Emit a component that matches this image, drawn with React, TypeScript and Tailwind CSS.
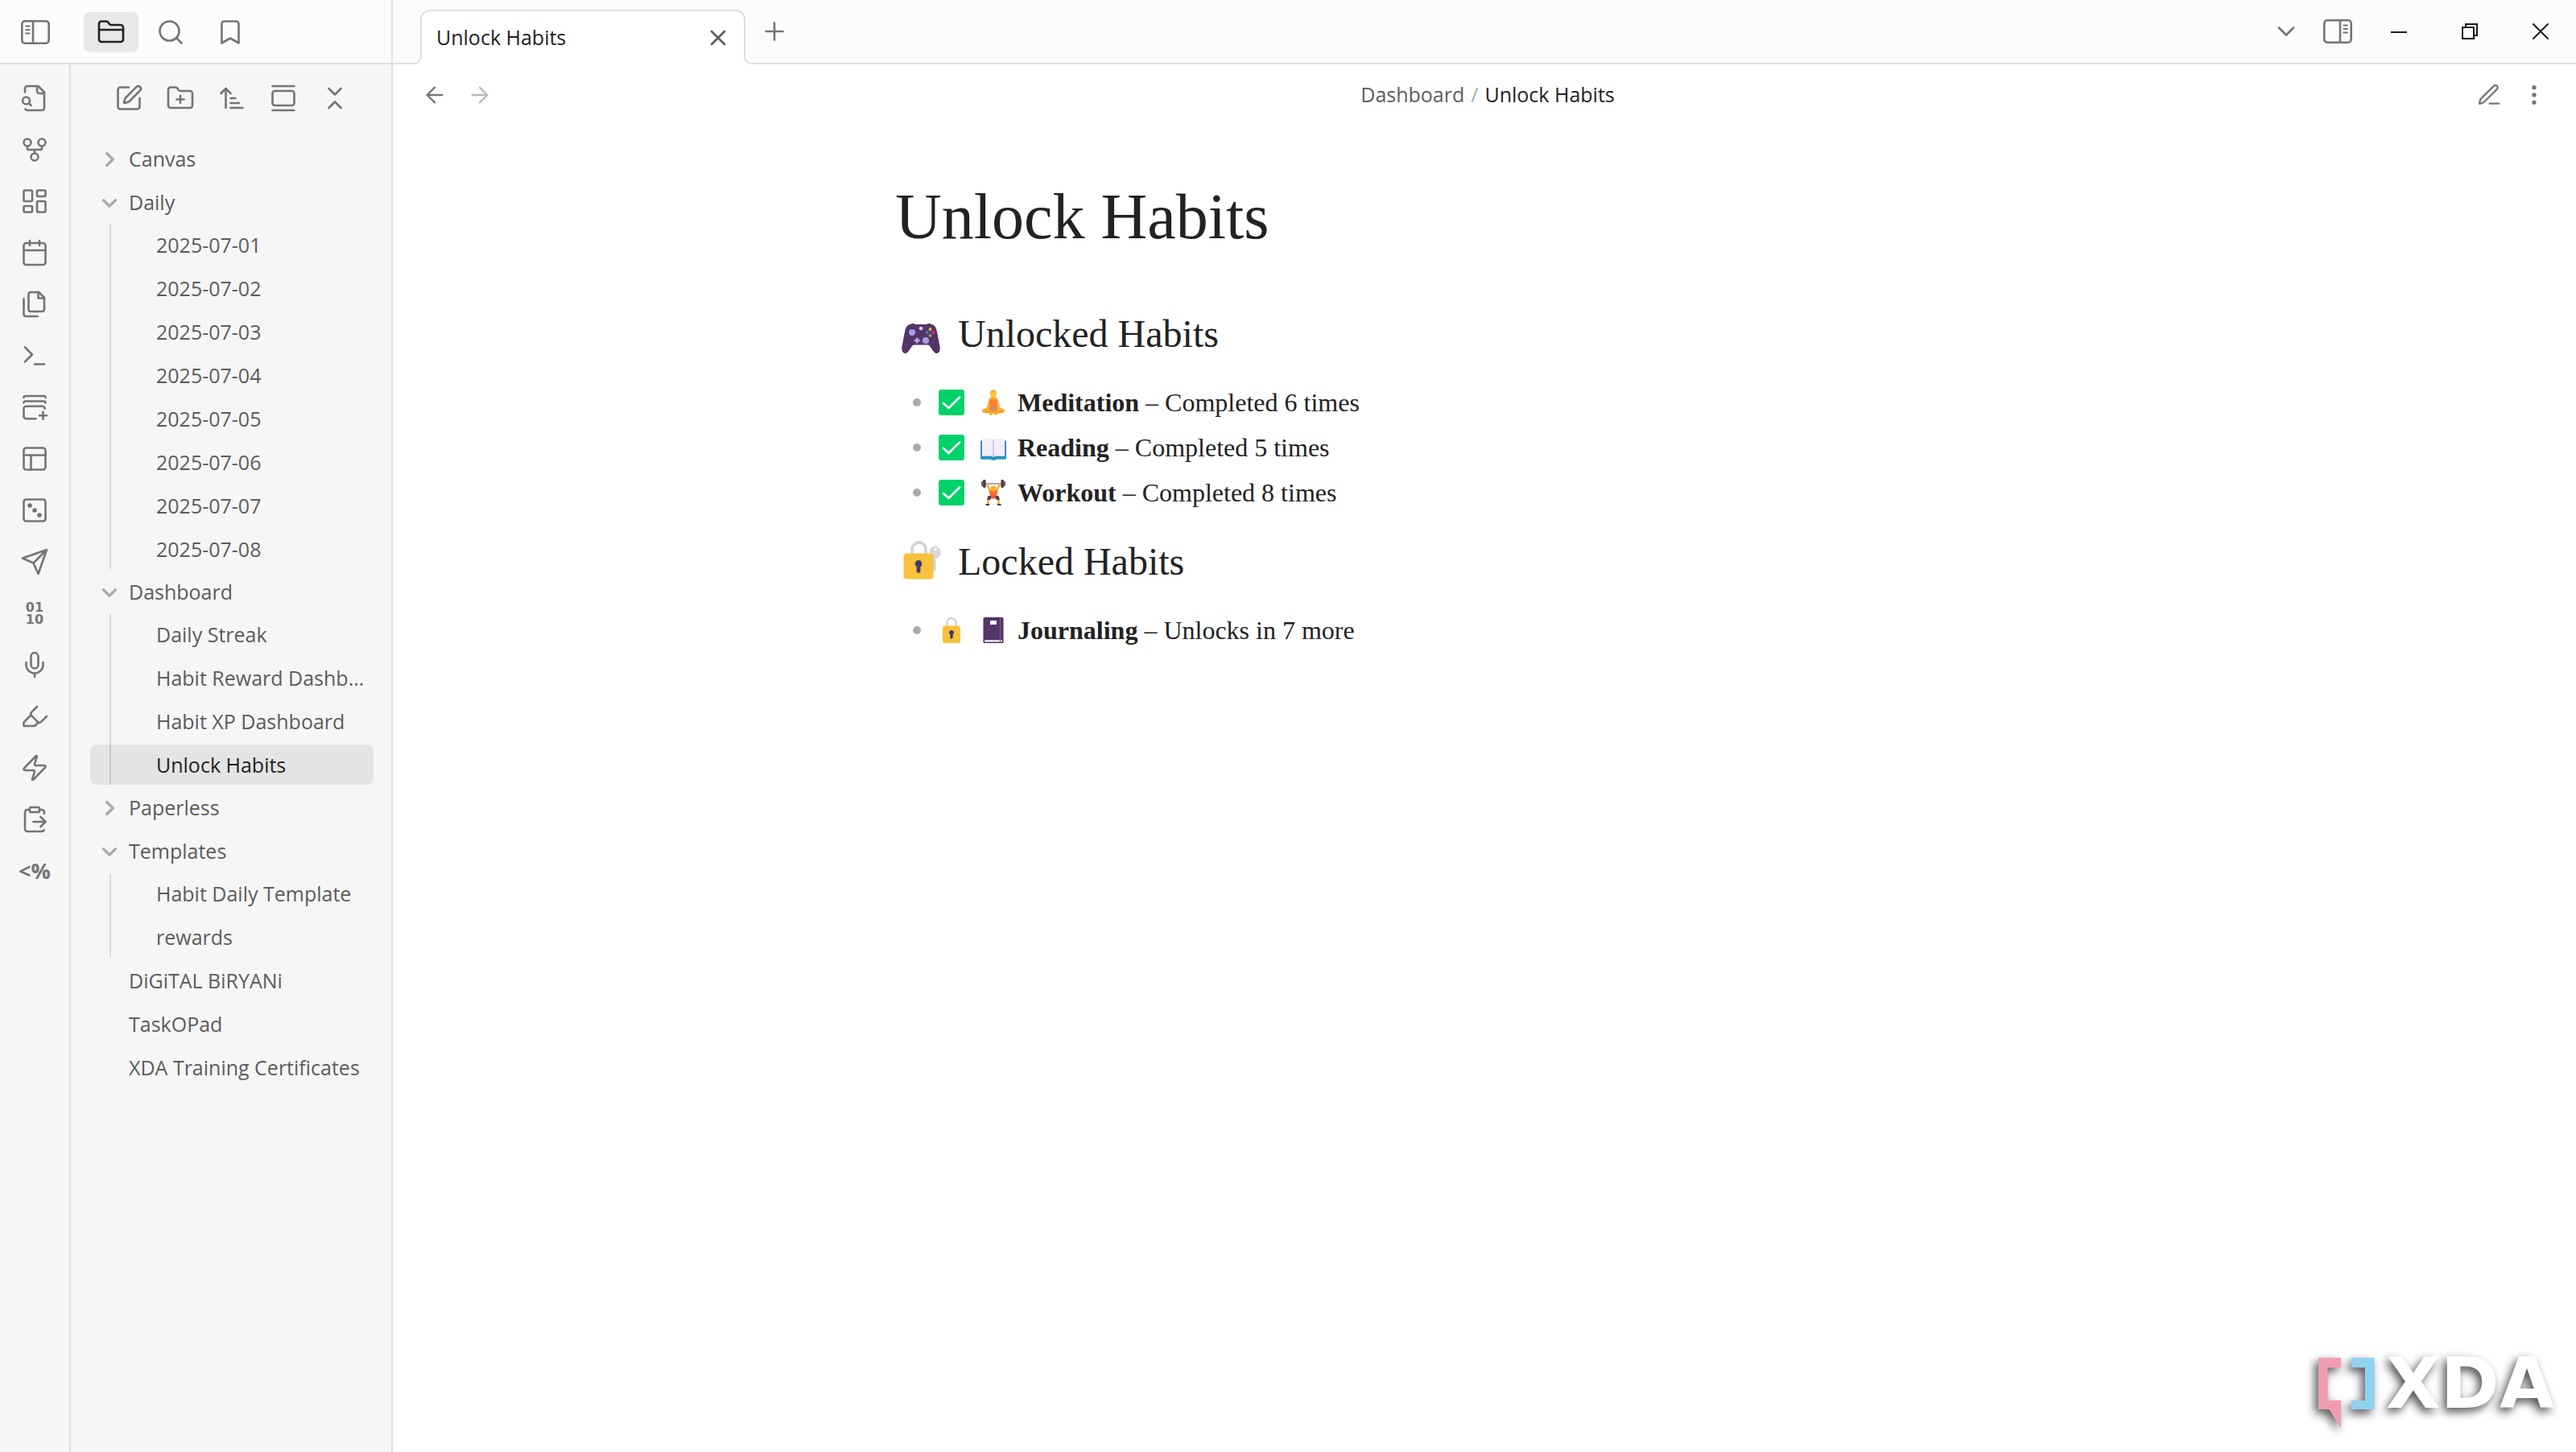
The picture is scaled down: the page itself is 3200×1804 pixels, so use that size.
import type { ReactNode } from 'react'
import {
  ArrowLeft,
  ArrowRight,
  ArrowUpNarrowWide,
  Bookmark,
  Calendar,
  ChevronDown,
  ChevronsDownUp,
  ClipboardPaste,
  EllipsisVertical,
  FolderClosed,
  FolderPlus,
  GalleryVertical,
  GitFork,
  Highlighter,
  LayoutDashboard,
  Mic,
  PanelsTopLeft,
  Plus,
  Search,
  SquarePen,
  X,
  Zap,
} from 'lucide-react'
import { clsx } from 'clsx'

type IconProps = { className?: string }

function StrokeIcon({
  className = 'size-9',
  children,
}: IconProps & { children: ReactNode }) {
  return (
    <svg
      viewBox="0 0 24 24"
      className={className}
      fill="none"
      stroke="currentColor"
      strokeWidth={1.75}
      strokeLinecap="round"
      strokeLinejoin="round"
      aria-hidden="true"
    >
      {children}
    </svg>
  )
}

function SidebarIcon({ className }: IconProps) {
  return (
    <svg
      viewBox="0 0 40 36"
      className={clsx('h-9 w-10', className)}
      fill="none"
      stroke="currentColor"
      strokeWidth={2.6}
      strokeLinecap="round"
      aria-hidden="true"
    >
      <rect x="3.3" y="4.3" width="33.4" height="27.4" rx="3.6" />
      <path d="M17 4.5v27" />
      <path d="M8.2 10.5h4.4M8.2 15h4.4M8.2 19.5h4.4" strokeWidth={2.2} />
    </svg>
  )
}

function FileSearchIcon() {
  return (
    <StrokeIcon>
      <path d="M4 7V4a2 2 0 0 1 2-2h9l5 5v13a2 2 0 0 1-2 2H6a2 2 0 0 1-1.7-1" />
      <path d="M14 2v4a2 2 0 0 0 2 2h4" />
      <circle cx="5" cy="14" r="3" />
      <path d="m9 18-1.5-1.5" />
    </StrokeIcon>
  )
}

function FilesIcon() {
  return (
    <StrokeIcon>
      <path d="M15.5 2H8.6c-.4 0-.8.2-1.1.5-.3.3-.5.7-.5 1.1v12.8c0 .4.2.8.5 1.1.3.3.7.5 1.1.5h9.8c.4 0 .8-.2 1.1-.5.3-.3.5-.7.5-1.1V6.5L15.5 2z" />
      <path d="M3 7.6v12.8c0 .4.2.8.5 1.1.3.3.7.5 1.1.5h9.8" />
      <path d="M15 2v5h5" />
    </StrokeIcon>
  )
}

function TerminalIcon() {
  return (
    <StrokeIcon>
      <path d="m4 17 6-6-6-6M12 19h8" />
    </StrokeIcon>
  )
}

function StackPlusIcon() {
  return (
    <StrokeIcon>
      <path d="M3 4c0-.9.4-1.3 1.3-1.3h15.4c.9 0 1.3.4 1.3 1.3" />
      <path d="M3 8.3c0-.9.4-1.3 1.3-1.3h15.4c.9 0 1.3.4 1.3 1.3" />
      <path d="M13 21.5H5a2 2 0 0 1-2-2v-6.3a2 2 0 0 1 2-2h13.5a2 2 0 0 1 2 2" />
      <path d="M19 15.8v6M16 18.8h6" />
    </StrokeIcon>
  )
}

function DiceIcon() {
  return (
    <StrokeIcon>
      <rect x="3" y="3" width="18" height="18" rx="2" />
      <circle cx="8" cy="8" r="1" fill="currentColor" />
      <circle cx="12" cy="12" r="1" fill="currentColor" />
      <circle cx="16" cy="16" r="1" fill="currentColor" />
    </StrokeIcon>
  )
}

function SendIcon() {
  return (
    <StrokeIcon>
      <path d="M22 2 11 13M22 2l-7 20-4-9-9-4Z" />
    </StrokeIcon>
  )
}

function PenIcon() {
  return (
    <StrokeIcon className="size-8">
      <path d="M16.4 3.6a2.1 2.1 0 0 1 3 3L7.6 18.4c-1 1-2.6 1.5-4.4 1.7.1-1.8.3-3.7 1.3-4.7Z" />
      <path d="M12.5 20H21" />
    </StrokeIcon>
  )
}

function CollapseIcon({ open }: { open: boolean }) {
  return (
    <svg
      viewBox="0 0 24 24"
      className={clsx('size-5 shrink-0 text-[#ababab]', !open && '-rotate-90')}
      fill="none"
      stroke="currentColor"
      strokeWidth={4}
      strokeLinecap="round"
      strokeLinejoin="round"
      aria-hidden="true"
    >
      <path d="m3 8 9 9 9-9" />
    </svg>
  )
}

function GamepadEmoji() {
  return (
    <svg viewBox="0 -10 48 48" className="size-12" aria-hidden="true">
      <path d="M10 2.500q4-3 8 0v3h-8zM30 2.500q4-3 8 0v3h-8z" fill="#1c1526" />
      <path
        d="M10 2C6.500 3.500 5 6 4 11L.4 30c-.7 5 1.200 8 4.200 8 2.200 0 3.400-1.800 5-4l3-4.500c1-1.500 2-2 4-2h14.800c2 0 3 .5 4 2l3 4.500c1.600 2.200 2.800 4 5 4 3 0 4.900-3 4.200-8L44 11c-1-5-2.500-7.500-6-9H10Z"
        fill="#533566"
      />
      <circle cx="13" cy="12" r="4" fill="#a89be8" />
      <circle cx="30" cy="22" r="4" fill="#a89be8" />
      <path d="M18 18.500h2.400v2.300h2.300v2.400h-2.300v2.300H18v-2.300h-2.300v-2.400H18z" fill="#b9abef" />
      <circle cx="24" cy="7" r="2.300" fill="#dcd2f5" />
      <circle cx="35.500" cy="8" r="1.900" fill="#f0b83c" />
      <circle cx="31.700" cy="12" r="1.900" fill="#2f8ccd" />
      <circle cx="39.400" cy="12" r="1.900" fill="#d8306a" />
      <circle cx="35.500" cy="15.800" r="1.900" fill="#a6a04a" />
    </svg>
  )
}

function CheckEmoji() {
  return (
    <svg viewBox="0 0 32 32" className="size-8" aria-hidden="true">
      <rect width="32" height="32" rx="3.500" fill="#00d26a" />
      <path
        d="m6 17 6.500 6L26 9.500"
        fill="none"
        stroke="#fff"
        strokeWidth="2.600"
        strokeLinecap="round"
        strokeLinejoin="round"
      />
    </svg>
  )
}

function MeditationEmoji() {
  return (
    <svg viewBox="0 0 32 32" className="size-8" aria-hidden="true">
      <path d="M16 9c-4 0-5.500 2-6.300 6L8 22l-5 2.500c-2 1.500-1 4 1.500 4.500l6.500.8 1 2.200h2l1-2h2l1 2h2l1-2.200 6.500-.8c2.500-.5 3.500-3 1.500-4.500L24 22l-1.700-7c-.8-4-2.300-6-6.300-6Z" fill="#ffb02e" />
      <path d="M11.500 13.500c1.500-2 7.500-2 9 0L21 25H11z" fill="#ff822d" />
      <path d="M12 21h8l.7 4.500q-4.700 2-9.400 0z" fill="#c98a6b" />
      <path d="M5 27.500c4 .6 7-.5 11-.5s7 1.100 11 .5" stroke="#e59412" strokeWidth="1.200" fill="none" />
      <path d="M14.200 8h3.600v4q-1.800 2-3.600 0z" fill="#f3a321" />
      <ellipse cx="16" cy="5" rx="4" ry="5" fill="#ffc23e" />
      <path d="M12.500 3q3.500-2.500 7 0" stroke="#e8a020" strokeWidth="1" fill="none" />
    </svg>
  )
}

function BookEmoji() {
  return (
    <svg viewBox="0 0 32 32" className="size-8" aria-hidden="true">
      <path d="M0 7.500h32V29q0 1.500-1.500 1.500h-11q-1 1.500-3.500 1.500t-3.500-1.500h-11Q0 30.500 0 29Z" fill="#3f8fc4" />
      <path d="M0 27h32v2.300q0 1.200-1.500 1.200h-29Q0 30.500 0 29.300Z" fill="#2196bd" />
      <path d="M2 6.500Q2 5 3.500 5H14q2 0 2 2v20.500q-1-1-3-1H2ZM30 6.500Q30 5 28.500 5H18q-2 0-2 2v20.500q1-1 3-1h11Z" fill="#f3eef8" />
      <path d="M16 6.500v21" stroke="#c3b8d6" strokeWidth="1.200" />
      <path d="M2 26.500h11q2 0 3 1 1-1 3-1h11" stroke="#cdc4dc" fill="none" />
    </svg>
  )
}

function LifterEmoji() {
  return (
    <svg viewBox="0 0 32 32" className="size-8" aria-hidden="true">
      <path d="M5 5h22" stroke="#998ea4" strokeWidth="1.600" />
      <path d="M8 5.500 12.500 15M24 5.500 19.500 15" stroke="#ffb02e" strokeWidth="2.600" strokeLinecap="round" />
      <rect x="3" y="0" width="3.600" height="10" rx="1.400" fill="#483651" />
      <rect x="1" y="2" width="2.500" height="6" rx="1" fill="#6b5678" />
      <rect x="25.400" y="0" width="3.600" height="10" rx="1.400" fill="#483651" />
      <rect x="28.500" y="2" width="2.500" height="6" rx="1" fill="#6b5678" />
      <path d="M10.500 14q5.500-4 11 0l-1.500 7h-8z" fill="#ff6d2d" />
      <circle cx="16" cy="11" r="3.600" fill="#ffb02e" />
      <path d="M9.500 20h13l1.500 5h-4l-1.500-2h-5l-1.500 2H8z" fill="#533f5c" />
      <path d="M13 19.500h6v4h-6z" fill="#d8623a" />
      <path d="M9.500 25v5M22.500 25v5" stroke="#ffb02e" strokeWidth="2.600" />
      <path d="M6.500 30h4.500v2H6.500zM21 30h4.500v2H21z" fill="#483651" />
    </svg>
  )
}

function LockEmoji() {
  return (
    <svg viewBox="0 0 32 32" className="size-8" aria-hidden="true">
      <path d="M10.500 12V6.500a5.500 5.500 0 0 1 11 0V12" fill="none" stroke="#d3d3d3" strokeWidth="2.400" />
      <rect x="5" y="10.500" width="22" height="21.500" rx="2.500" fill="#f9c23c" />
      <path d="M16 16a3 3 0 0 0-1.700 5.500V25a1.700 1.700 0 0 0 3.400 0v-3.500A3 3 0 0 0 16 16Z" fill="#433b6b" />
    </svg>
  )
}

function LockKeyEmoji() {
  return (
    <svg
      viewBox="-2 2 48 48"
      className="size-12 overflow-visible"
      aria-hidden="true"
    >
      <path d="M39.500 6.500a7.500 7.500 0 0 0-4.500 13l-1 4 2.500 2L34 38h4.500l2-1.500V22.500c4-1.500 6.500-4.500 6-8.500a7.500 7.500 0 0 0-7-7.500Z" fill="#d6d6d6" />
      <circle cx="40" cy="10.500" r="1.800" fill="#fff" />
      <path d="M11 17v-6.500a8.500 8.500 0 0 1 17 0V17" fill="none" stroke="#d3d3d3" strokeWidth="3.800" />
      <rect x=".5" y="15.500" width="37" height="32" rx="4" fill="#f9c23c" />
      <path d="M19 24a4.400 4.400 0 0 0-2.400 8v5.500a2.400 2.400 0 0 0 4.800 0V32A4.400 4.400 0 0 0 19 24Z" fill="#433b6b" />
    </svg>
  )
}

function NotebookEmoji() {
  return (
    <svg viewBox="0 0 32 32" className="size-8" aria-hidden="true">
      <rect x="3.500" y="0" width="25" height="32" rx="1.500" fill="#44275c" />
      <path d="M5 28h22v2.700H5z" fill="#e4dcee" />
      <path d="M4 28V2.500Q4 1 5.500 1H28v27z" fill="#533566" />
      <rect x="12" y="4" width="8" height="5" rx=".6" fill="#fff" />
      <path d="M24.500 0v32" stroke="#7d5a96" strokeWidth="1.200" />
    </svg>
  )
}

type TreeNode = { name: string; open?: boolean; children?: string[] }

const tree: TreeNode[] = [
  { name: 'Canvas', open: false, children: [] },
  {
    name: 'Daily',
    open: true,
    children: [
      '2025-07-01',
      '2025-07-02',
      '2025-07-03',
      '2025-07-04',
      '2025-07-05',
      '2025-07-06',
      '2025-07-07',
      '2025-07-08',
    ],
  },
  {
    name: 'Dashboard',
    open: true,
    children: [
      'Daily Streak',
      'Habit Reward Dashb...',
      'Habit XP Dashboard',
      'Unlock Habits',
    ],
  },
  { name: 'Paperless', open: false, children: [] },
  {
    name: 'Templates',
    open: true,
    children: ['Habit Daily Template', 'rewards'],
  },
  { name: 'DiGiTAL BiRYANi' },
  { name: 'TaskOPad' },
  { name: 'XDA Training Certificates' },
]

const activeFile = 'Unlock Habits'

const ribbon = [
  { label: 'Open quick switcher', icon: <FileSearchIcon /> },
  {
    label: 'Open graph view',
    icon: <GitFork className="size-9" strokeWidth={1.75} />,
  },
  {
    label: 'Create new canvas',
    icon: <LayoutDashboard className="size-9" strokeWidth={1.75} />,
  },
  {
    label: "Open today's daily note",
    icon: <Calendar className="size-9" strokeWidth={1.75} />,
  },
  { label: 'Insert template', icon: <FilesIcon /> },
  { label: 'Open command palette', icon: <TerminalIcon /> },
  { label: 'Add to stack', icon: <StackPlusIcon /> },
  {
    label: 'Manage workspace layouts',
    icon: <PanelsTopLeft className="size-9" strokeWidth={1.75} />,
  },
  { label: 'Open random note', icon: <DiceIcon /> },
  { label: 'Publish changes', icon: <SendIcon /> },
  {
    label: 'Unique note',
    icon: (
      <span className="font-['DejaVu_Sans',sans-serif] text-base leading-[15px] font-bold">
        01
        <br />
        10
      </span>
    ),
  },
  {
    label: 'Start recording',
    icon: <Mic className="size-9" strokeWidth={1.75} />,
  },
  {
    label: 'Highlight',
    icon: <Highlighter className="size-9" strokeWidth={1.75} />,
  },
  {
    label: 'Quick action',
    icon: <Zap className="size-9" strokeWidth={1.75} />,
  },
  {
    label: 'Paste into note',
    icon: <ClipboardPaste className="size-9" strokeWidth={1.75} />,
  },
  {
    label: 'Templater',
    icon: <span className="text-[27px] font-bold">&lt;%</span>,
  },
]

const explorerActions = [
  { label: 'New note', Icon: SquarePen },
  { label: 'New folder', Icon: FolderPlus },
  { label: 'Change sort order', Icon: ArrowUpNarrowWide },
  { label: 'Auto-reveal current file', Icon: GalleryVertical },
  { label: 'Collapse all', Icon: ChevronsDownUp },
]

function TitleBar() {
  return (
    <header className="flex h-20 border-b-2 border-[#e0e0e0] bg-[#fcfcfc] text-[#757575]">
      <div className="-mb-[2px] flex w-[488px] shrink-0 items-center border-r-2 border-[#e0e0e0]">
        <button
          aria-label="Toggle left sidebar"
          className="flex w-[88px] justify-center"
        >
          <SidebarIcon />
        </button>
        <div className="flex gap-[6px] pl-4">
          <button
            aria-label="Files"
            className="flex h-[50px] w-[68px] items-center justify-center rounded-lg bg-[#e8e8e8] text-[#222]"
          >
            <FolderClosed className="size-9" strokeWidth={1.75} />
          </button>
          <button
            aria-label="Search"
            className="flex h-[50px] w-[68px] items-center justify-center"
          >
            <Search className="size-9" strokeWidth={1.75} />
          </button>
          <button
            aria-label="Bookmarks"
            className="flex h-[50px] w-[68px] items-center justify-center"
          >
            <Bookmark className="size-9" strokeWidth={1.75} />
          </button>
        </div>
      </div>

      <div className="flex flex-1 items-center">
        <div className="relative -mb-[2px] ml-[34px] flex h-[68px] w-[404px] items-center justify-between self-end rounded-t-xl border-2 border-b-0 border-[#e0e0e0] bg-white pr-4 pl-[18px]">
          <span className="absolute bottom-0 -left-3 size-3 bg-white">
            <span className="block size-3 rounded-br-[10px] border-r-2 border-b-2 border-[#e0e0e0] bg-[#fcfcfc]" />
          </span>
          <a href="#unlock-habits" className="text-[#222]">
            Unlock Habits
          </a>
          <button aria-label="Close tab" className="text-[#5c5c5c]">
            <X className="size-8" strokeWidth={2} />
          </button>
          <span className="absolute -right-3 bottom-0 size-3 bg-white">
            <span className="block size-3 rounded-bl-[10px] border-b-2 border-l-2 border-[#e0e0e0] bg-[#fcfcfc]" />
          </span>
        </div>
        <button aria-label="New tab" className="ml-[18px]">
          <Plus className="size-9" strokeWidth={1.75} />
        </button>
      </div>

      <div className="flex items-center">
        <button aria-label="Tab list" className="flex w-16 justify-center">
          <ChevronDown className="size-9" strokeWidth={1.75} />
        </button>
        <button
          aria-label="Toggle right sidebar"
          className="flex w-16 justify-center"
        >
          <SidebarIcon className="-scale-x-100" />
        </button>
        <div className="flex text-[#1a1a1a]">
          <button aria-label="Minimize" className="flex w-[88px] justify-center">
            <svg viewBox="0 0 20 20" className="size-5" aria-hidden="true">
              <path d="M0 11h20" stroke="currentColor" strokeWidth="2" />
            </svg>
          </button>
          <button aria-label="Restore" className="flex w-[88px] justify-center">
            <svg
              viewBox="0 0 20 20"
              className="size-5"
              fill="none"
              stroke="currentColor"
              strokeWidth="2"
              aria-hidden="true"
            >
              <path d="M1 5h14v14H1zM5 5V1h14v14h-4" />
            </svg>
          </button>
          <button aria-label="Close" className="flex w-[88px] justify-center">
            <svg viewBox="0 0 20 20" className="size-5" aria-hidden="true">
              <path
                d="m1 1 18 18M19 1 1 19"
                stroke="currentColor"
                strokeWidth="2"
                strokeLinecap="round"
              />
            </svg>
          </button>
        </div>
      </div>
    </header>
  )
}

function Ribbon() {
  return (
    <aside className="flex w-[88px] shrink-0 flex-col items-center gap-7 border-r-2 border-[#e0e0e0] bg-[#f6f6f6] pt-6 text-[#757575]">
      {ribbon.map(({ label, icon }) => (
        <button
          key={label}
          aria-label={label}
          className="flex h-9 items-center justify-center"
        >
          {icon}
        </button>
      ))}
    </aside>
  )
}

function FileLink({ name }: { name: string }) {
  return (
    <a
      href="#"
      className={clsx(
        'block h-[50px] truncate rounded-lg pl-[82px] leading-[50px]',
        name === activeFile && 'bg-black/7 text-[#222]',
      )}
    >
      {name}
    </a>
  )
}

function Explorer() {
  return (
    <nav className="flex w-[400px] shrink-0 flex-col border-r-2 border-[#e0e0e0] bg-[#f6f6f6] pt-6 text-[#5c5c5c]">
      <div className="flex gap-7 pl-[54px] text-[#757575]">
        {explorerActions.map(({ label, Icon }) => (
          <button key={label} aria-label={label}>
            <Icon className="size-9" strokeWidth={1.75} />
          </button>
        ))}
      </div>
      <ul className="flex flex-col gap-1 pt-[33px] pr-[22px] pl-6">
        {tree.map(({ name, open, children }) => (
          <li key={name}>
            {children ? (
              <button
                aria-expanded={open}
                className="flex h-[50px] w-full items-center gap-[14px] pl-[14px]"
              >
                <CollapseIcon open={!!open} />
                {name}
              </button>
            ) : (
              <a href="#" className="block h-[50px] truncate pl-12 leading-[50px]">
                {name}
              </a>
            )}
            {open && children && (
              <ul className="relative mt-[2px] flex flex-col gap-1">
                <span className="absolute inset-y-0 left-6 w-[2px] bg-[#d9d9d9]" />
                {children.map((child) => (
                  <li key={child} className="relative">
                    <FileLink name={child} />
                  </li>
                ))}
              </ul>
            )}
          </li>
        ))}
      </ul>
    </nav>
  )
}

function ViewHeader() {
  return (
    <div className="flex h-[76px] items-center px-9 text-[#757575]">
      <div className="flex gap-6">
        <button aria-label="Navigate back">
          <ArrowLeft className="size-8" strokeWidth={1.75} />
        </button>
        <button aria-label="Navigate forward" disabled className="text-[#bababa]">
          <ArrowRight className="size-8" strokeWidth={1.75} />
        </button>
      </div>
      <div className="flex flex-1 justify-center gap-2 pl-2">
        <a href="#dashboard" className="text-[#5c5c5c]">
          Dashboard
        </a>
        <span className="text-[#ababab]">/</span>
        <span className="text-[#222]">Unlock Habits</span>
      </div>
      <div className="flex gap-6">
        <button aria-label="Edit">
          <PenIcon />
        </button>
        <button aria-label="More options">
          <EllipsisVertical className="size-8" strokeWidth={2} />
        </button>
      </div>
    </div>
  )
}

type HabitProps = {
  status: ReactNode
  icon: ReactNode
  name: string
  detail: string
}

function Habit({ status, icon, name, detail }: HabitProps) {
  return (
    <li className="flex items-center pl-[22px] leading-12">
      <span className="mr-[22px] size-[10px] rounded-full bg-[#ababab]" />
      <span className="mr-5">{status}</span>
      <span className="mr-[14px]">{icon}</span>
      <span>
        <strong>{name}</strong> – {detail}
      </span>
    </li>
  )
}

function Note() {
  return (
    <article
      id="unlock-habits"
      className="mx-auto w-full max-w-[1464px] pt-[65px] font-['Liberation_Serif',serif] text-[32px] text-[#222]"
    >
      <h1 className="text-[80px] leading-24">Unlock Habits</h1>

      <h2 className="mt-[69px] flex items-center gap-[22px] pl-2 text-5xl leading-[58px]">
        <GamepadEmoji />
        Unlocked Habits
      </h2>
      <ul className="mt-8 flex flex-col gap-2">
        <Habit
          status={<CheckEmoji />}
          icon={<MeditationEmoji />}
          name="Meditation"
          detail="Completed 6 times"
        />
        <Habit
          status={<CheckEmoji />}
          icon={<BookEmoji />}
          name="Reading"
          detail="Completed 5 times"
        />
        <Habit
          status={<CheckEmoji />}
          icon={<LifterEmoji />}
          name="Workout"
          detail="Completed 8 times"
        />
      </ul>

      <h2 className="mt-[33px] flex items-center gap-[22px] pl-2 text-5xl leading-[58px]">
        <LockKeyEmoji />
        Locked Habits
      </h2>
      <ul className="mt-8 flex flex-col gap-2">
        <Habit
          status={<LockEmoji />}
          icon={<NotebookEmoji />}
          name="Journaling"
          detail="Unlocks in 7 more"
        />
      </ul>
    </article>
  )
}

function Watermark() {
  return (
    <div className="fixed right-[27px] bottom-[30px] flex items-start gap-[14px] drop-shadow-[-4px_5px_6px_rgba(0,0,0,0.7)]">
      <svg viewBox="0 0 70 87" className="h-[87px] w-[70px]" aria-hidden="true">
        <path d="M0 0h28v12H11.500v41H28v34L13.500 64H0z" fill="#f09db1" />
        <path d="M41 0h28.500v64H41V53h17V12H41z" fill="#90d2f2" />
      </svg>
      <span className="font-['DejaVu_Sans',sans-serif] text-[88px] leading-16 font-bold text-white">
        XDA
      </span>
    </div>
  )
}

export default function App() {
  return (
    <div className="flex min-h-screen flex-col bg-white font-['Open_Sans',sans-serif] text-[25px]">
      <TitleBar />
      <div className="flex flex-1">
        <Ribbon />
        <Explorer />
        <main className="flex flex-1 flex-col">
          <ViewHeader />
          <Note />
        </main>
      </div>
      <Watermark />
    </div>
  )
}
